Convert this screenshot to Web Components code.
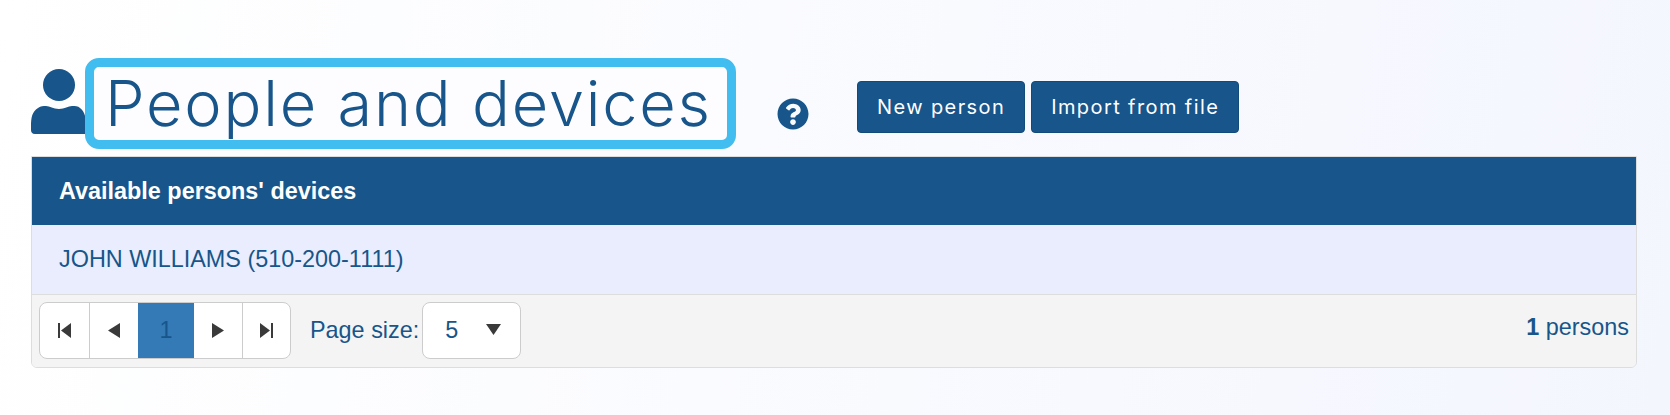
<!DOCTYPE html>
<html>
<head>
<meta charset="utf-8">
<title>People and devices</title>
<style>
  html, body { margin: 0; height: 100%; }
  body {
    background: linear-gradient(100deg, #ffffff 0%, #f4f6fe 100%);
    font-family: "Liberation Sans", Arial, sans-serif;
    color: #17558a;
    overflow: hidden;
  }
</style>
</head>
<body>
<people-page></people-page>

<script>
// Small helper, every element has the same shadow setup.
const shadow = (el, html) => {
  el.attachShadow({ mode: 'open' }).innerHTML = html
}

customElements.define('page-title', class extends HTMLElement {
  constructor () {
    super()
    shadow(this, `
    <style>
      :host { display: flex; align-items: flex-start; height: 91px; }
      svg { display: block; }
      .person { margin-top: 11px; flex: none; }
      h1 {
        box-sizing: border-box;
        margin: 0 0 0 -1px;
        width: 651px;
        height: 91px;
        border: 9px solid #42bdf0;
        border-radius: 14px;
        background: #fdfdff;
        padding-left: 11px;
        font: 300 63px/73px Inter, "Open Sans", sans-serif;
        letter-spacing: 1.8px;
        color: #17558a;
        white-space: nowrap;
      }
      .help { margin: 40px 48px 0 41px; flex: none; }
      .actions { display: flex; gap: 6px; margin-top: 23px; }
    </style>
    <svg class="person" width="55" height="65" viewBox="0 0 55 65" fill="#17558a">
      <ellipse cx="28" cy="16" rx="16" ry="16"/>
      <path d="M0 58C0 48 1 43 7 39c3-2 5-2 8-2 4 0 7 3 13 3s9-3 13-3c3 0 6 0 8 2 5 4 6 9 6 19v7H4c-3 0-4-2-4-4z"/>
    </svg>
    <h1><slot name="title"></slot></h1>
    <svg class="help" width="32" height="32" viewBox="0 0 512 512" fill="#17558a">
      <path d="M504 256c0 136.997-111.043 248-248 248S8 392.997 8 256C8 119.083 119.043 8 256 8s248 111.083 248 248zM262.655 90c-54.497 0-89.255 22.957-116.549 63.758-3.536 5.286-2.353 12.415 2.715 16.258l34.699 26.31c5.205 3.947 12.621 3.008 16.665-2.122 17.864-22.658 30.113-35.797 57.303-35.797 20.429 0 45.698 13.148 45.698 32.958 0 14.976-12.363 22.667-32.534 33.976C247.128 238.528 216 254.941 216 296v4c0 6.627 5.373 12 12 12h56c6.627 0 12-5.373 12-12v-1.333c0-28.462 83.186-29.647 83.186-106.667 0-58.002-60.165-102-116.531-102zM256 338c-25.365 0-46 20.635-46 46 0 25.364 20.635 46 46 46s46-20.636 46-46c0-25.365-20.635-46-46-46z"/>
    </svg>
    <div class="actions"><slot></slot></div>
    `)
  }
})

customElements.define('action-button', class extends HTMLElement {
  constructor () {
    super()
    shadow(this, `
    <style>
      :host {
        display: flex;
        align-items: center;
        justify-content: center;
        box-sizing: border-box;
        height: 52px;
        padding: 0 19px;
        background: #17558a;
        border: 1px solid #124a79;
        border-radius: 4px;
        color: #fff;
        font: 400 20px Inter, "Open Sans", sans-serif;
        letter-spacing: 1.4px;
        white-space: nowrap;
      }
    </style>
    <slot></slot>
    `)
  }
})

customElements.define('pager-bar', class extends HTMLElement {
  constructor () {
    super()
    shadow(this, `
    <style>
      :host { display: flex; align-items: center; height: 57px; font-size: 23.4px; color: #17558a; }
      .pager {
        display: grid;
        grid-template-columns: 49px 49px 56px 1fr 1fr;
        box-sizing: border-box;
        width: 252px;
        height: 57px;
        background: #fff;
        border: 1px solid #ccc;
        border-radius: 8px;
        overflow: hidden;
      }
      .pager > div {
        display: flex;
        align-items: center;
        justify-content: center;
        border-left: 1px solid #ccc;
      }
      .pager > div:first-child { border-left: 0; }
      .pager > .current {
        background: #337ab7;
        border-left: 0;
        margin-top: -1px;
        margin-bottom: -1px;
      }
      .pager > .current + div { border-left: 0; }
      .label { margin-left: 19px; }
      .select {
        display: flex;
        align-items: center;
        box-sizing: border-box;
        width: 99px;
        height: 57px;
        margin-left: 3px;
        padding-left: 22px;
        background: #fff;
        border: 1px solid #ccc;
        border-radius: 8px;
      }
      .select svg { margin-left: 28px; margin-top: -3px; }
      .total { margin-left: auto; margin-right: 7px; margin-top: -6px; }
      b { font-weight: 700; }
    </style>
    <div class="pager">
      <div><svg width="13" height="15" viewBox="0 0 13 15" fill="#3a3a3a"><rect x="0" y="0" width="2" height="15"/><path d="M13 0v15L3 7.5z"/></svg></div>
      <div><svg width="12" height="15" viewBox="0 0 12 15" fill="#3a3a3a"><path d="M12 0v15L0 7.5z"/></svg></div>
      <div class="current">1</div>
      <div><svg width="12" height="15" viewBox="0 0 12 15" fill="#3a3a3a"><path d="M0 0v15l12-7.5z"/></svg></div>
      <div><svg width="13" height="15" viewBox="0 0 13 15" fill="#3a3a3a"><rect x="11" y="0" width="2" height="15"/><path d="M0 0v15l10-7.5z"/></svg></div>
    </div>
    <span class="label">Page size:</span>
    <div class="select">5<svg width="15" height="11" viewBox="0 0 15 11" fill="#3a3a3a"><path d="M0 0h15l-7.5 11z"/></svg></div>
    <span class="total"><b>1</b> persons</span>
    `)
  }
})

customElements.define('device-table', class extends HTMLElement {
  constructor () {
    super()
    shadow(this, `
    <style>
      :host {
        display: block;
        box-sizing: border-box;
        border: 1px solid #ddd;
        border-radius: 0 0 6px 6px;
        overflow: hidden;
        font-size: 23.4px;
      }
      .head {
        display: flex;
        align-items: center;
        height: 68px;
        padding-left: 27px;
        background: #17558a;
        color: #fff;
        font-weight: 700;
      }
      .row {
        display: flex;
        align-items: center;
        height: 70px;
        padding-left: 27px;
        background: #e9edfd;
        color: #17558a;
        border-bottom: 1px solid #ddd;
        box-sizing: border-box;
      }
      .foot {
        padding: 7px 0 8px 7px;
        background: #f4f4f4;
      }
    </style>
    <div class="head"><slot name="head"></slot></div>
    <div class="row"><slot name="row"></slot></div>
    <div class="foot"><pager-bar></pager-bar></div>
    `)
  }
})

customElements.define('people-page', class extends HTMLElement {
  constructor () {
    super()
    shadow(this, `
    <style>
      :host { display: block; padding: 58px 33px 0 31px; }
      device-table { margin: 7px 0 0 0; }
    </style>
    <page-title>
      <span slot="title">People and devices</span>
      <action-button>New person</action-button>
      <action-button>Import from file</action-button>
    </page-title>
    <device-table>
      <span slot="head">Available persons' devices</span>
      <span slot="row">JOHN WILLIAMS (510-200-1111)</span>
    </device-table>
    `)
  }
})
</script>
</body>
</html>
